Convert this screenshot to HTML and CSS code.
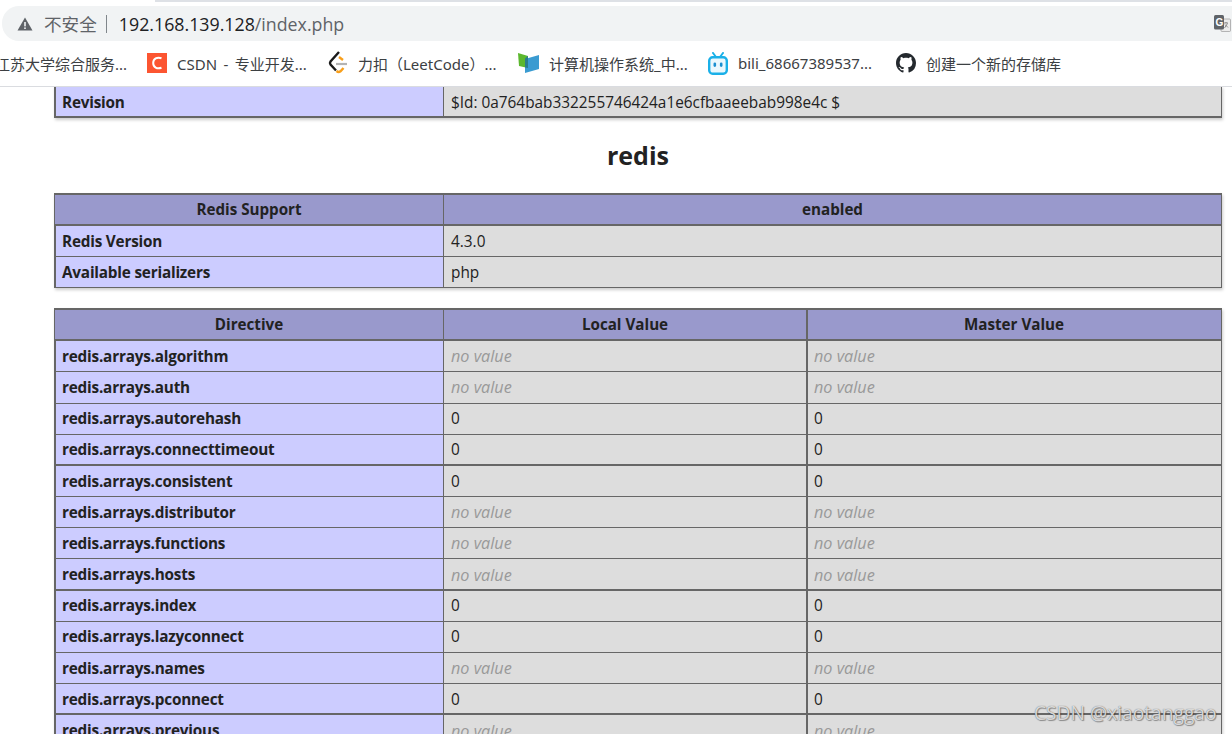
FILE: index.html
```html
<!DOCTYPE html>
<html lang="zh">
<head>
<meta charset="utf-8">
<title>phpinfo()</title>
<link rel="stylesheet" href="styles.css">
</head>
<body>
<div class="browser">
  <div class="topstrip"></div>
  <div class="omnibar">
    <svg class="warn" width="16" height="14" viewBox="0 0 16 14"><path d="M8 0.5 15.500 13.500H0.500Z" fill="#5f6368"/><rect x="7.200" y="5" width="1.600" height="4.400" fill="#f1f3f4"/><rect x="7.200" y="10.400" width="1.600" height="1.600" fill="#f1f3f4"/></svg>
    <span class="insecure">不安全</span>
    <span class="sep"></span>
    <span class="url">192.168.139.128<span class="path">/index.php</span></span>
    <svg class="translate" width="17" height="17" viewBox="0 0 17 17"><rect x="7" y="4" width="9.500" height="12.500" rx="1" fill="#ececec" stroke="#999" stroke-width=".7"/><path d="M10 8h4M12 7v1M10.500 13 13.500 8.500M11 9.500l3 3" stroke="#666" stroke-width=".7" fill="none"/><rect x="0" y="0" width="10" height="14.500" rx="1.500" fill="#5f6368"/><text x="1.500" y="11" class="tg">G</text></svg>
  </div>
  <div class="bookmarks">
    <span class="bm bm-first">江苏大学综合服务...</span>
    <span class="bm bm-csdn"><svg width="20" height="20" viewBox="0 0 20 20"><rect width="20" height="20" fill="#fc5531"/><path d="M14.500 5.200C10 3.600 6.200 5.800 6.200 10s3.800 6.400 8.300 4.800" fill="none" stroke="#fff" stroke-width="2"/></svg>CSDN - 专业开发...</span>
    <span class="bm bm-leet"><svg width="20" height="24" viewBox="0 0 20 24"><path d="M11 1 2.500 10.500q-1 1.500 0 3L8 19.500" fill="none" stroke="#1a1a1a" stroke-width="2.400"/><path d="M11 6l4 3M8.500 20q2 1.800 4 .3L15.500 17" fill="none" stroke="#f89f1b" stroke-width="2.400"/><path d="M8 13H19" stroke="#b3b3b3" stroke-width="2.200"/></svg>力扣（LeetCode）...</span>
    <span class="bm bm-book"><svg width="21" height="20" viewBox="0 0 21 20"><path d="M0 0 10 3V15L1 13Z" fill="#5cb82e"/><path d="M21 2V16L7 20V6Z" fill="#3a9bd1"/><path d="M7 5.500 10 3V15L7 14.500Z" fill="#2a7d8c"/></svg>计算机操作系统_中...</span>
    <span class="bm bm-bili"><svg width="20" height="23" viewBox="0 0 20 23"><path d="M5 1 8 5M15 1 12 5" stroke="#1ab0e8" stroke-width="2" stroke-linecap="round"/><rect x="1.200" y="5.200" width="17.600" height="16.600" rx="3.500" fill="#eaf8fd" stroke="#1ab0e8" stroke-width="2.400"/><rect x="5.500" y="10.500" width="2.600" height="4.400" rx="1.300" fill="#1a8fd0"/><rect x="11.900" y="10.500" width="2.600" height="4.400" rx="1.300" fill="#1a8fd0"/></svg>bili_68667389537...</span>
    <span class="bm"><svg width="20" height="20" viewBox="0 0 16 16"><path fill="#24292e" d="M8 0C3.580 0 0 3.580 0 8c0 3.540 2.290 6.530 5.470 7.590.4.070.55-.17.55-.38 0-.19-.01-.82-.01-1.490-2.010.37-2.530-.49-2.690-.94-.09-.23-.48-.94-.82-1.130-.28-.15-.68-.52-.01-.53.630-.01 1.080.58 1.230.82.720 1.210 1.870.87 2.330.66.070-.52.280-.87.510-1.070-1.780-.2-3.640-.89-3.640-3.950 0-.87.310-1.590.820-2.150-.08-.2-.36-1.020.08-2.120 0 0 .67-.21 2.200.82.640-.18 1.320-.27 2-.27s1.360.09 2 .27c1.530-1.040 2.200-.82 2.200-.82.440 1.100.16 1.920.08 2.120.51.560.82 1.270.82 2.150 0 3.070-1.870 3.750-3.650 3.950.29.250.54.730.54 1.480 0 1.070-.01 1.930-.01 2.200 0 .21.150.46.550.38A8.010 8.010 0 0 0 16 8c0-4.420-3.580-8-8-8z"/></svg>创建一个新的存储库</span>
  </div>
  <main class="page">
    <table class="info first">
      <tr class="thick"><th class="k">Revision</th><td class="v">$Id: 0a764bab332255746424a1e6cfbaaeebab998e4c $</td></tr>
    </table>
    <h2 class="heading">redis</h2>
    <table class="info">
      <tr class="h"><th class="k">Redis Support</th><th>enabled</th></tr>
      <tr><th class="k">Redis Version</th><td>4.3.0</td></tr>
      <tr><th class="k">Available serializers</th><td>php</td></tr>
    </table>
    <table class="info second">
      <colgroup><col class="c1"><col class="c2"><col></colgroup>
      <tr class="h"><th>Directive</th><th>Local Value</th><th>Master Value</th></tr>
      <tr><th class="k">redis.arrays.algorithm</th><td><i>no value</i></td><td><i>no value</i></td></tr>
      <tr><th class="k">redis.arrays.auth</th><td><i>no value</i></td><td><i>no value</i></td></tr>
      <tr><th class="k">redis.arrays.autorehash</th><td>0</td><td>0</td></tr>
      <tr class="thick"><th class="k">redis.arrays.connecttimeout</th><td>0</td><td>0</td></tr>
      <tr><th class="k">redis.arrays.consistent</th><td>0</td><td>0</td></tr>
      <tr><th class="k">redis.arrays.distributor</th><td><i>no value</i></td><td><i>no value</i></td></tr>
      <tr><th class="k">redis.arrays.functions</th><td><i>no value</i></td><td><i>no value</i></td></tr>
      <tr class="thick"><th class="k">redis.arrays.hosts</th><td><i>no value</i></td><td><i>no value</i></td></tr>
      <tr><th class="k">redis.arrays.index</th><td>0</td><td>0</td></tr>
      <tr><th class="k">redis.arrays.lazyconnect</th><td>0</td><td>0</td></tr>
      <tr><th class="k">redis.arrays.names</th><td><i>no value</i></td><td><i>no value</i></td></tr>
      <tr class="thick"><th class="k">redis.arrays.pconnect</th><td>0</td><td>0</td></tr>
      <tr><th class="k">redis.arrays.previous</th><td><i>no value</i></td><td><i>no value</i></td></tr>
    </table>
  </main>
  <div class="watermark">CSDN @xiaotanggao</div>
</div>
</body>
</html>
```
FILE: styles.css
```css
* { box-sizing: border-box; }
html, body { margin: 0; height: 100%; overflow: hidden; background: #fff; }
body { font-family: "Open Sans", "Noto Sans CJK SC", sans-serif; color: #222; }
.browser { position: relative; width: 1232px; height: 734px; display: flex; flex-direction: column; overflow: hidden; }
.topstrip { height: 2px; margin: 0 0 4px 155px; background: #dee1e6; flex: none; }
.omnibar { height: 35px; margin-left: 2px; flex: none; display: flex; align-items: center; padding: 0 1px 0 15px; background: #f1f3f4; border-radius: 17px 0 0 17px; }
.warn { flex: none; margin-right: 11px; }
.insecure { font-size: 17.600px; color: #5f6368; font-family: "Noto Sans CJK SC", sans-serif; }
.sep { width: 1px; height: 18px; background: #80868b; margin: 0 12px 0 9px; }
.url { font-size: 17.800px; color: #202124; font-family: "Open Sans", sans-serif; }
.path { color: #5f6368; }
.translate { margin-left: auto; flex: none; }
.tg { font: bold 10px "Liberation Sans", sans-serif; fill: #fff; }
.bookmarks { height: 46px; flex: none; display: flex; align-items: center; border-bottom: 1px solid #dadce0; color: #3c4043; white-space: nowrap; overflow: hidden; padding-bottom: 1px; }
.bm { flex: none; display: flex; align-items: center; gap: 10px; font-family: "Noto Sans", "Noto Sans CJK SC", sans-serif; font-size: 15px; word-spacing: 2.500px; }
.bm-first { width: 152px; margin-left: -5px; }
.bm-csdn { width: 181px; }
.bm-leet { width: 190px; }
.bm-book { width: 190px; }
.bm-bili { width: 188px; }
.page { flex: 1; min-height: 0; overflow: hidden; }
.info { width: 1168px; margin-left: 54px; border-collapse: collapse; table-layout: fixed; box-shadow: 1px 2px 3px #ccc; font-size: 15.360px; }
.info th, .info td { height: 31.200px; padding: 0 7px; border: 1px solid #666; vertical-align: middle; font-weight: normal; text-align: left; background: #ddd; color: #222; white-space: nowrap; overflow: hidden; }
.info th { font-weight: 700; font-size: 15.300px; letter-spacing: -.2px; padding-bottom: 1px; }
.info th.k { width: 389px; background: #ccf; box-shadow: inset 1px 0 0 #666; }
.info .h th, .info .h th.k { height: 31.800px; background: #99c; text-align: center; font-size: 15.200px; letter-spacing: 0; padding-bottom: 2px; box-shadow: inset 0 1px 0 #666, inset 0 -1px 0 #666; }
.info .thick td { box-shadow: inset 0 -1px 0 #666; }
.info .thick th.k { box-shadow: inset 1px 0 0 #666, inset 0 -1px 0 #666; }
.info i { color: #999; font-size: 16.200px; }
.second td:nth-child(3) { box-shadow: inset 1px 0 0 #666; }
.second .thick td:nth-child(3) { box-shadow: inset 1px 0 0 #666, inset 0 -1px 0 #666; }
.info.second .h th:nth-child(3) { box-shadow: inset 1px 0 0 #666, inset 0 1px 0 #666, inset 0 -1px 0 #666; }
.c1 { width: 389px; }
.c2 { width: 363px; }
.first { margin-top: -1px; }
.heading { margin: 0; height: 75px; display: flex; align-items: center; justify-content: center; font-size: 25px; font-weight: 700; color: #222; padding: 0 0 2px 44px; }
.second { margin-top: 20px; }
.watermark { position: absolute; left: 1034px; top: 699px; font-size: 19.200px; color: rgba(255,255,255,.75); text-shadow: 0 0 1px #555, 1px 1px 1px rgba(0,0,0,.35); white-space: nowrap; font-family: "Open Sans", sans-serif; }
```
